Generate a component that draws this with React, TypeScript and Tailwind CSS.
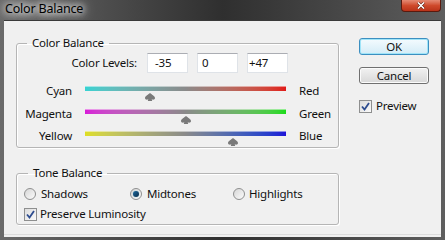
import React from "react";

const font = { fontFamily: '"Noto Sans", "Open Sans", sans-serif' };

function Thumb() {
  return (
    <svg width="10" height="8" viewBox="0 0 10 8">
      <path
        d="M5 0 C6.4 1.4 10 3 10 5 C10 6.6 8.2 7 6.7 6.3 L7.2 8 L2.8 8 L3.3 6.3 C1.8 7 0 6.6 0 5 C0 3 3.6 1.4 5 0Z"
        fill="#7a7a7a"
      />
    </svg>
  );
}

function SliderRow({
  left,
  right,
  value,
  gradient,
  h,
}: {
  left: string;
  right: string;
  value: number;
  gradient: string;
  h: string;
}) {
  const pct = (value + 100) / 200;
  return (
    <div className={`flex items-start ${h}`}>
      <div className="w-[55px] text-right -mt-[3px] leading-[16px]">{left}</div>
      <div className="relative ml-[13px] w-[201px] h-[5px]">
        <div className={`w-full h-[5px] border-t border-[#ffffff80] ${gradient}`} />
        <div className="absolute top-[7px]" style={{ left: `${pct * 201 - 5}px` }}>
          <Thumb />
        </div>
      </div>
      <div className="ml-[13px] -mt-[3px] leading-[16px]">{right}</div>
    </div>
  );
}

function Radio({ checked }: { checked?: boolean }) {
  return (
    <div className="w-[12px] h-[12px] rounded-full border border-[#8e8f8f] bg-gradient-to-br from-[#d6d6d6] to-[#fcfcfc] flex items-center justify-center">
      {checked && (
        <div className="w-[6px] h-[6px] rounded-full bg-gradient-to-br from-[#1b6a9f] to-[#0b2d4a] shadow-[0_0_1px_#5ab]" />
      )}
    </div>
  );
}

function Check() {
  return (
    <div className="w-[13px] h-[13px] border border-[#8e8f8f] bg-gradient-to-br from-[#dcdcdc] to-[#fafafa] flex items-center justify-center">
      <svg width="9" height="9" viewBox="0 0 9 9">
        <path d="M1 4.5 L3.5 7.5 L8 1" stroke="#2d4c8f" strokeWidth="1.8" fill="none" />
      </svg>
    </div>
  );
}

export default function App() {
  return (
    <div
      className="w-[445px] h-[240px] flex flex-col text-[11.5px] tracking-[-0.2px] text-[#111] overflow-hidden bg-gradient-to-r from-[#6a6a6a] via-[#2f2f2f] to-[#5e5e5e]"
      style={font}
    >
      {/* Title bar */}
      <div className="h-[20px] flex items-start justify-between shrink-0">
        <div className="pl-[5px] pt-[1px] text-[12.5px] leading-[16px] text-black [text-shadow:0_0_6px_#fff,0_0_10px_#fff,0_0_14px_#eee]">
          Color Balance
        </div>
        <div className="mr-[4px] w-[40px] h-[12px] rounded-b-[4px] border border-t-0 border-[#5a1a0e] bg-gradient-to-b from-[#e48a74] via-[#cf4a2c] to-[#b93219] flex items-center justify-center">
          <svg width="8" height="7" viewBox="0 0 8 7">
            <path d="M1 0.5 L7 6.5 M7 0.5 L1 6.5" stroke="#5a1a0e" strokeWidth="2.6" />
            <path d="M1 0.5 L7 6.5 M7 0.5 L1 6.5" stroke="#ffffff" strokeWidth="1.6" />
          </svg>
        </div>
      </div>

      {/* Body */}
      <div className="mx-[4px] mb-[3px] flex-1 bg-[#f0f0f0] border-t border-[#3a3a3a] flex flex-col">
        <div className="flex items-start">
          <fieldset className="ml-[12px] mt-[14px] w-[323px] h-[113px] border border-[#b5b5b5] rounded-[3px] shadow-[inset_1px_1px_0_#fff,1px_1px_0_#fff]">
            <legend className="ml-[10px] px-[5px] leading-[16px]">Color Balance</legend>
            <div className="flex items-center mt-[2px]">
              <div className="w-[120px] text-right">Color Levels:</div>
              <div className="ml-[10px] flex gap-[9px]">
                <div className="w-[41px] h-[20px] bg-white border border-[#dfe3e8] border-t-[#abadb3] pl-[7px] leading-[18px]">-35</div>
                <div className="w-[41px] h-[20px] bg-white border border-[#dfe3e8] border-t-[#abadb3] pl-[4px] leading-[18px]">0</div>
                <div className="w-[41px] h-[20px] bg-white border border-[#dfe3e8] border-t-[#abadb3] pl-[1px] leading-[18px]">+47</div>
              </div>
            </div>
            <div className="mt-[13px] flex flex-col">
              <SliderRow
                left="Cyan"
                right="Red"
                value={-35}
                h="h-[23px]"
                gradient="bg-gradient-to-r from-[#36d2d2] via-[#8a8a8a] to-[#e01818]"
              />
              <SliderRow
                left="Magenta"
                right="Green"
                value={0}
                h="h-[22px]"
                gradient="bg-gradient-to-r from-[#d81ad8] via-[#8a8a8a] to-[#18dc18]"
              />
              <SliderRow
                left="Yellow"
                right="Blue"
                value={47}
                h="h-[22px]"
                gradient="bg-gradient-to-r from-[#dede20] via-[#8a8a8a] to-[#2010d8]"
              />
            </div>
          </fieldset>

          <div className="ml-[20px] mt-[17px] flex flex-col">
            <div className="w-[70px] h-[17px] rounded-[3px] border border-[#3c8fc0] shadow-[inset_0_0_0_1px_#9fe4f8] bg-gradient-to-b from-[#f4fbfe] to-[#d4ecf7] flex items-center justify-center leading-[14px]">
              OK
            </div>
            <div className="mt-[12px] w-[70px] h-[17px] rounded-[3px] border border-[#707070] shadow-[inset_0_0_0_1px_#fbfbfb] bg-gradient-to-b from-[#f2f2f2] to-[#d8d8d8] flex items-center justify-center leading-[14px]">
              Cancel
            </div>
            <div className="mt-[15px] flex items-center gap-[4px]">
              <Check />
              <span className="leading-[14px]">Preview</span>
            </div>
          </div>
        </div>

        <fieldset className="ml-[12px] mt-[17px] w-[323px] h-[60px] border border-[#b5b5b5] rounded-[3px] shadow-[inset_1px_1px_0_#fff,1px_1px_0_#fff]">
          <legend className="ml-[11px] px-[5px] leading-[16px]">Tone Balance</legend>
          <div className="mt-[5px] pl-[7px] flex items-center h-[16px]">
            <div className="w-[106px] flex items-center gap-[5px]">
              <Radio />
              <span>Shadows</span>
            </div>
            <div className="w-[103px] flex items-center gap-[5px]">
              <Radio checked />
              <span>Midtones</span>
            </div>
            <div className="flex items-center gap-[4px]">
              <Radio />
              <span>Highlights</span>
            </div>
          </div>
          <div className="mt-[4px] pl-[7px] flex items-center gap-[3px] h-[16px]">
            <Check />
            <span>Preserve Luminosity</span>
          </div>
        </fieldset>
        <div className="mt-auto mb-[2px] border-t border-[#dcdcdc]" />
      </div>
    </div>
  );
}
